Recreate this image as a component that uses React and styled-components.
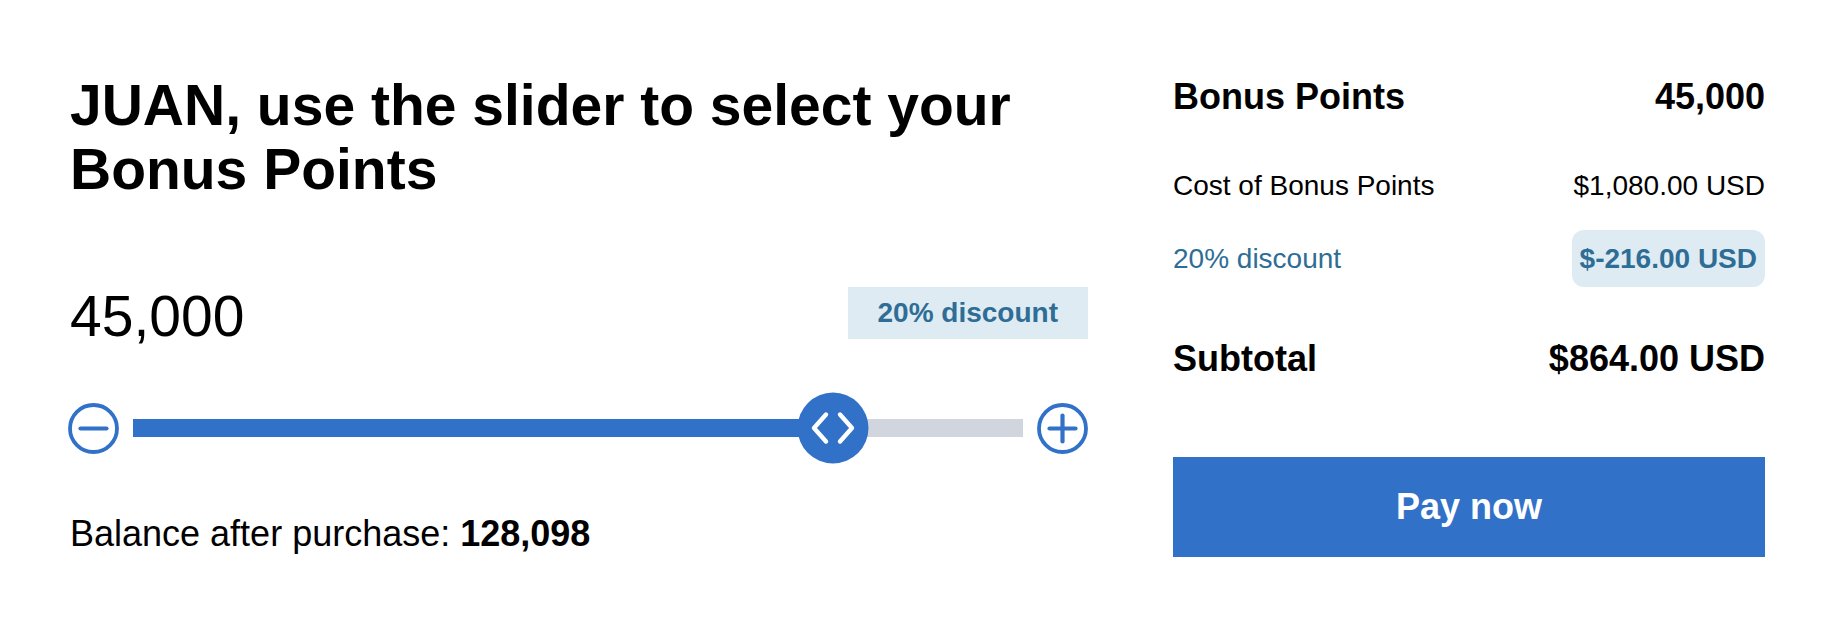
import styled, { createGlobalStyle } from "styled-components";

const BLUE = "#3171c8";
const TEAL = "#2e6d95";
const PALE = "#dfebf3";

const GlobalStyle = createGlobalStyle`
    body{
        margin: 0;
        background: #ffffff;
        font-family: "Liberation Sans", Arial, sans-serif;
        color: #000000;
    }
`

function CircleIcon({ plus }){
    return(
        <svg width="51" height="51" viewBox="0 0 51 51">
            <circle cx="25.5" cy="25.5" r="23.5" fill="none" stroke={BLUE} strokeWidth="3.8"/>
            <line x1="12.5" y1="25.5" x2="38.5" y2="25.5" stroke={BLUE} strokeWidth="4.2" strokeLinecap="round"/>
            {plus && <line x1="25.5" y1="12.5" x2="25.5" y2="38.5" stroke={BLUE} strokeWidth="4.2" strokeLinecap="round"/>}
        </svg>
    )
}

function Chevrons(){
    return(
        <svg width="71" height="71" viewBox="-35.5 -35.5 71 71">
            <polyline points="-7,-13.5 -19,0 -7,13.5" fill="none" stroke="#ffffff" strokeWidth="4.4" strokeLinecap="round" strokeLinejoin="round"/>
            <polyline points="7,-13.5 19,0 7,13.5" fill="none" stroke="#ffffff" strokeWidth="4.4" strokeLinecap="round" strokeLinejoin="round"/>
        </svg>
    )
}

export default function App(){
    const min = 0;
    const max = 57250;
    const value = 45000;
    const percent = ((value - min) / (max - min)) * 100;

    return(
        <>
            <GlobalStyle/>
            <Page>
                <Selector>
                    <Title>JUAN, use the slider to select your Bonus Points</Title>
                    <AmountRow>
                        <Amount>45,000</Amount>
                        <DiscountTag>20% discount</DiscountTag>
                    </AmountRow>
                    <SliderRow>
                        <StepButton aria-label="decrease"><CircleIcon/></StepButton>
                        <Track>
                            <Fill style={{ width: `${percent}%` }}/>
                            <Thumb style={{ left: `${percent}%` }}><Chevrons/></Thumb>
                        </Track>
                        <StepButton aria-label="increase"><CircleIcon plus/></StepButton>
                    </SliderRow>
                    <Balance>Balance after purchase: <b>128,098</b></Balance>
                </Selector>
                <Summary>
                    <Line $size={36} $bold>
                        <span>Bonus Points</span>
                        <span>45,000</span>
                    </Line>
                    <Line $size={28} $gap={53}>
                        <span>Cost of Bonus Points</span>
                        <span>$1,080.00 USD</span>
                    </Line>
                    <Line $size={28} $gap={28} $color={TEAL}>
                        <span>20% discount</span>
                        <Saving>$-216.00 USD</Saving>
                    </Line>
                    <Line $size={36} $gap={51} $bold>
                        <span>Subtotal</span>
                        <span>$864.00 USD</span>
                    </Line>
                    <PayButton>Pay now</PayButton>
                </Summary>
            </Page>
        </>
    )
}

const Page = styled.div`
    display: flex;
    gap: 85px;
    padding: 73px 69px 0 70px;
`
const Selector = styled.div`
    flex: 1;
    display: flex;
    flex-direction: column;
`
const Title = styled.h1`
    margin: 0;
    font-size: 57px;
    line-height: 64px;
    font-weight: 700;
`
const AmountRow = styled.div`
    margin-top: 82px;
    display: flex;
    justify-content: space-between;
    align-items: center;
`
const Amount = styled.div`
    font-size: 57px;
    line-height: 66px;
`
const DiscountTag = styled.div`
    height: 52px;
    margin-bottom: 6px;
    padding: 0 30px;
    display: flex;
    align-items: center;
    background-color: ${PALE};
    color: ${TEAL};
    font-size: 28px;
    font-weight: 700;
`
const SliderRow = styled.div`
    margin-top: 43px;
    height: 72px;
    display: flex;
    align-items: center;
    gap: 14px;
    margin-left: -2px;
`
const StepButton = styled.button`
    border: none;
    background: none;
    padding: 0;
    width: 51px;
    height: 51px;
    display: flex;
    cursor: pointer;
`
const Track = styled.div`
    flex: 1;
    height: 18px;
    position: relative;
    background-color: #d1d6de;
`
const Fill = styled.div`
    height: 100%;
    background-color: ${BLUE};
`
const Thumb = styled.div`
    position: absolute;
    top: 50%;
    width: 71px;
    height: 71px;
    border-radius: 50%;
    transform: translate(-50%, -50%);
    background-color: ${BLUE};
    display: flex;
    svg{
        display: block;
    }
`
const Balance = styled.p`
    margin: 49px 0 0;
    font-size: 36px;
    line-height: 41px;
    b{
        font-weight: 700;
    }
`
const Summary = styled.div`
    width: 592px;
    padding-top: 3px;
    display: flex;
    flex-direction: column;
`
const Line = styled.div`
    margin-top: ${p => p.$gap || 0}px;
    display: flex;
    justify-content: space-between;
    align-items: center;
    font-size: ${p => p.$size}px;
    line-height: ${p => Math.round(p.$size * 1.145)}px;
    font-weight: ${p => p.$bold ? 700 : 400};
    color: ${p => p.$color || "#000000"};
`
const Saving = styled.span`
    height: 57px;
    padding: 0 8px;
    display: flex;
    align-items: center;
    border-radius: 12px;
    background-color: ${PALE};
    font-weight: 700;
`
const PayButton = styled.button`
    margin-top: 78px;
    height: 100px;
    width: 100%;
    border: none;
    background-color: ${BLUE};
    color: #ffffff;
    font-family: "Liberation Sans", Arial, sans-serif;
    font-size: 36px;
    font-weight: 700;
    cursor: pointer;
`
